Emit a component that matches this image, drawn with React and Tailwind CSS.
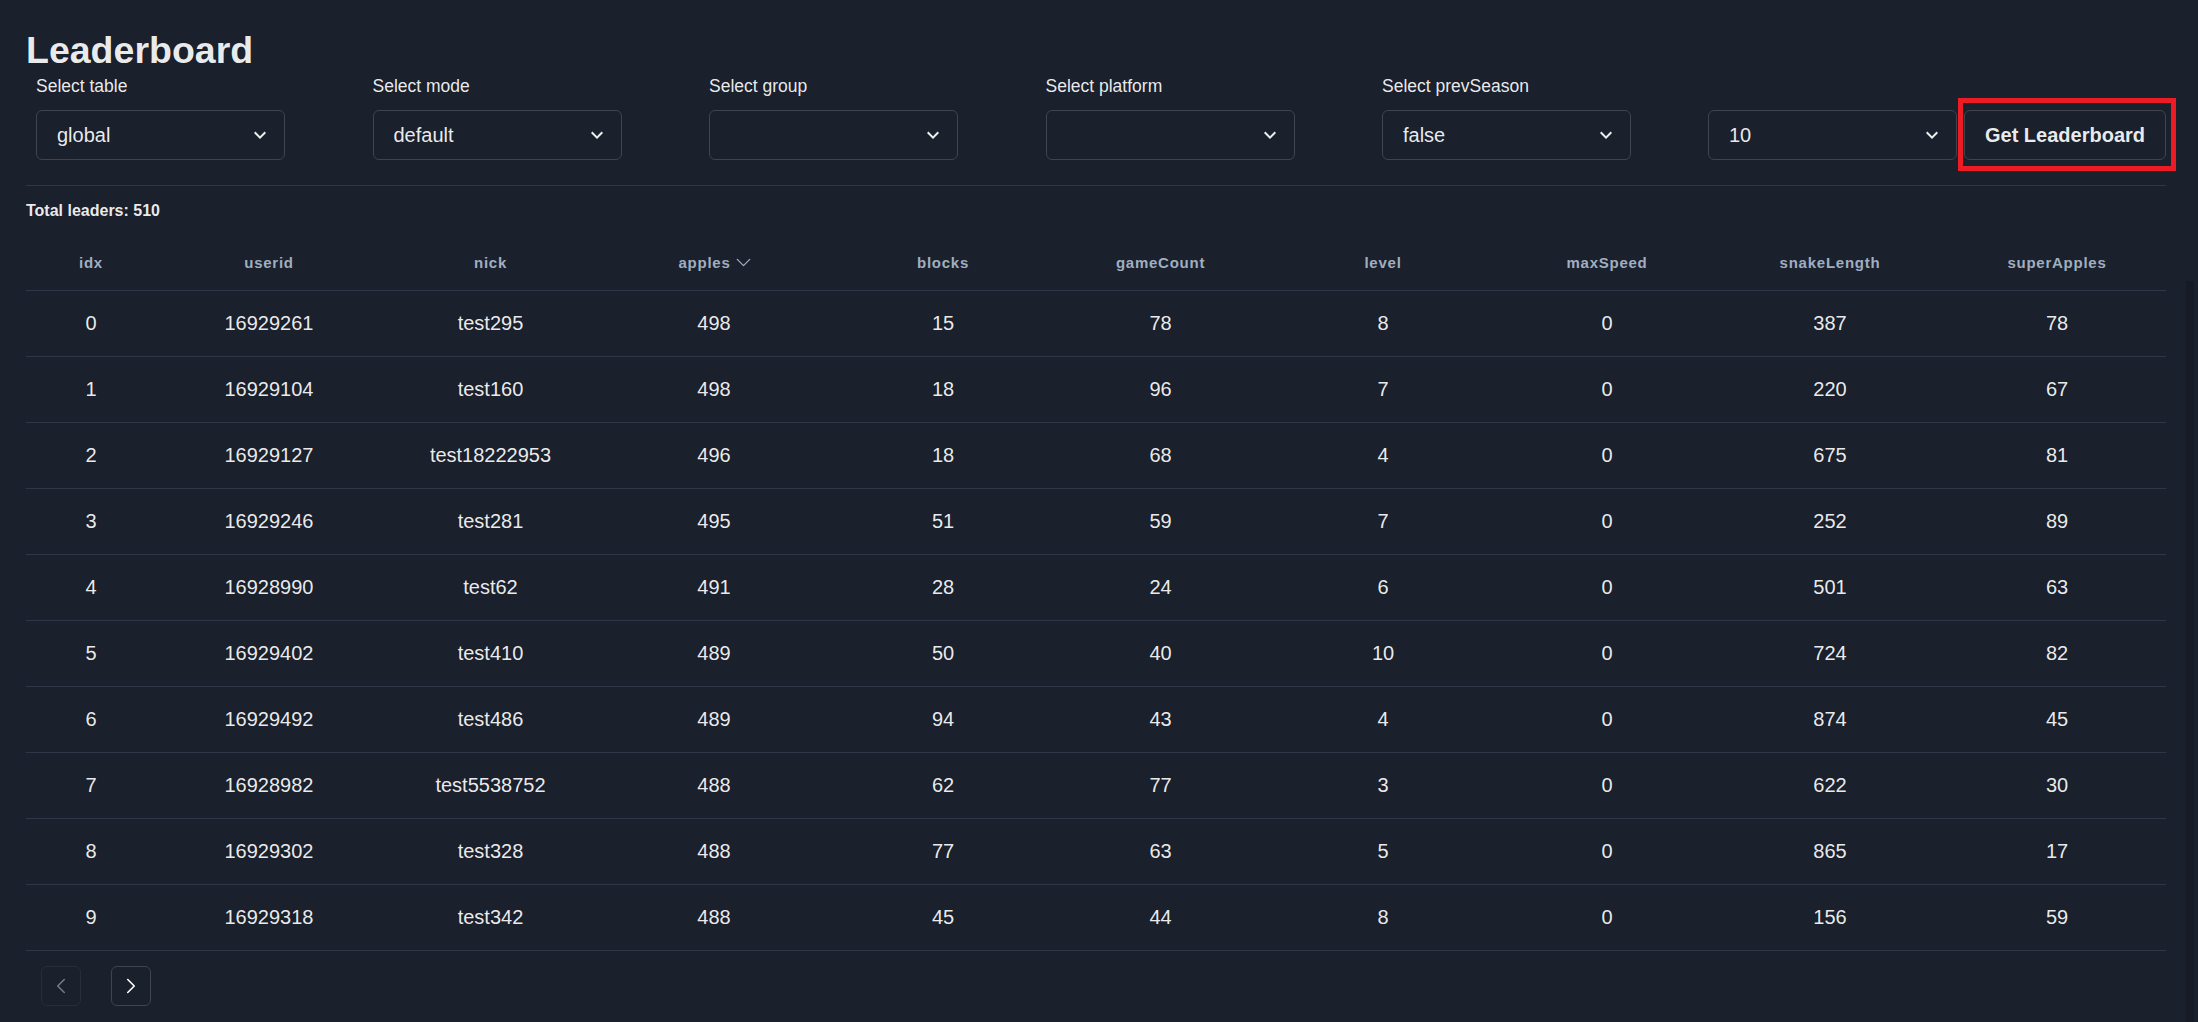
import { ChevronDown, ChevronLeft, ChevronRight } from "lucide-react";

const font = { fontFamily: '"Liberation Sans", Arial, sans-serif' };

const columns = [
  { key: "idx", width: "w-[130px]" },
  { key: "userid", width: "w-[226px]" },
  { key: "nick", width: "w-[217px]" },
  { key: "apples", width: "w-[230px]", sorted: true },
  { key: "blocks", width: "w-[228px]" },
  { key: "gameCount", width: "w-[207px]" },
  { key: "level", width: "w-[238px]" },
  { key: "maxSpeed", width: "w-[210px]" },
  { key: "snakeLength", width: "w-[236px]" },
  { key: "superApples", width: "w-[218px]" },
];

const leaders = [
  [0, 16929261, "test295", 498, 15, 78, 8, 0, 387, 78],
  [1, 16929104, "test160", 498, 18, 96, 7, 0, 220, 67],
  [2, 16929127, "test18222953", 496, 18, 68, 4, 0, 675, 81],
  [3, 16929246, "test281", 495, 51, 59, 7, 0, 252, 89],
  [4, 16928990, "test62", 491, 28, 24, 6, 0, 501, 63],
  [5, 16929402, "test410", 489, 50, 40, 10, 0, 724, 82],
  [6, 16929492, "test486", 489, 94, 43, 4, 0, 874, 45],
  [7, 16928982, "test5538752", 488, 62, 77, 3, 0, 622, 30],
  [8, 16929302, "test328", 488, 77, 63, 5, 0, 865, 17],
  [9, 16929318, "test342", 488, 45, 44, 8, 0, 156, 59],
];

const filters = [
  { label: "Select table", value: "global", wrap: "w-[336.5px]" },
  { label: "Select mode", value: "default", wrap: "w-[336.5px]" },
  { label: "Select group", value: "", wrap: "w-[336.5px]" },
  { label: "Select platform", value: "", wrap: "w-[336.5px]" },
  { label: "Select prevSeason", value: "false", wrap: "w-[326px]" },
];

function SelectBox({ value }) {
  return (
    <div className="relative flex h-[50px] w-[249px] items-center rounded-[6px] border border-[#3f444e] pl-[20px] text-[20px] text-white/[0.92]">
      <span>{value}</span>
      <svg
        viewBox="0 0 24 24"
        className="absolute right-[12px] top-1/2 h-[24px] w-[24px] -translate-y-1/2 fill-white/[0.92]"
      >
        <path d="M16.59 8.59L12 13.17 7.41 8.59 6 10l6 6 6-6z" />
      </svg>
    </div>
  );
}

export default function App() {
  return (
    <div className="relative min-h-screen w-full overflow-hidden bg-[#1a202c] pl-[26px] pr-[32px] pt-[27px] text-white/[0.92]" style={font}>
      <h1 className="text-[37.5px] font-bold leading-[46px]">Leaderboard</h1>

      <div className="flex items-end pl-[10px]">
        {filters.map((filter) => (
          <div key={filter.label} className={`${filter.wrap} shrink-0`}>
            <p className="mb-[11px] text-[17.5px] leading-[26px]">{filter.label}</p>
            <SelectBox value={filter.value} />
          </div>
        ))}
        <SelectBox value="10" />
        <div className="relative ml-[7px]">
          <button
            type="button"
            className="flex h-[50px] w-[202px] items-center justify-center rounded-[6px] border border-[#3f444e] text-[20px] font-bold text-white/[0.92]"
          >
            Get Leaderboard
          </button>
          <span className="pointer-events-none absolute -bottom-[11px] -left-[6px] -right-[10px] -top-[12px] border-[5px] border-[#ed1c24]" />
        </div>
      </div>

      <div className="mt-[25px] border-t border-[#30353f]" />

      <p className="mt-[13px] text-[16px] font-bold leading-[24px]">Total leaders: 510</p>

      <table className="mt-[12px] w-[2140px] table-fixed border-collapse">
        <thead>
          <tr>
            {columns.map((col) => (
              <th
                key={col.key}
                className={`${col.width} border-b border-[#2d3748] py-[15px] text-center text-[15px] font-bold leading-[20px] tracking-[0.05em] text-[#a0aec0]`}
              >
                <span className="inline-flex items-center">
                  {col.key}
                  {col.sorted ? <ChevronDown size={25} strokeWidth={1.25} className="-mr-[6px]" /> : null}
                </span>
              </th>
            ))}
          </tr>
        </thead>
        <tbody>
          {leaders.map((row) => (
            <tr key={row[0]}>
              {row.map((cell, i) => (
                <td
                  key={columns[i].key}
                  className="border-b border-[#2d3748] py-[20px] text-center text-[20px] leading-[25px] text-white/[0.92]"
                >
                  {cell}
                </td>
              ))}
            </tr>
          ))}
        </tbody>
      </table>

      <div className="ml-[15px] mt-[15px] flex gap-[30px]">
        <button
          type="button"
          disabled
          className="flex h-[40px] w-[40px] items-center justify-center rounded-[6px] border border-[#3f444e] text-white opacity-40"
        >
          <ChevronLeft size={26} strokeWidth={1.5} />
        </button>
        <button
          type="button"
          className="flex h-[40px] w-[40px] items-center justify-center rounded-[6px] border border-[#3f444e] text-white"
        >
          <ChevronRight size={26} strokeWidth={1.5} />
        </button>
      </div>

      {/* scrollbar strip on the right edge */}
      <div className="absolute bottom-0 right-[4px] top-[281px] w-[8px] bg-[#171b26]" />
    </div>
  );
}
